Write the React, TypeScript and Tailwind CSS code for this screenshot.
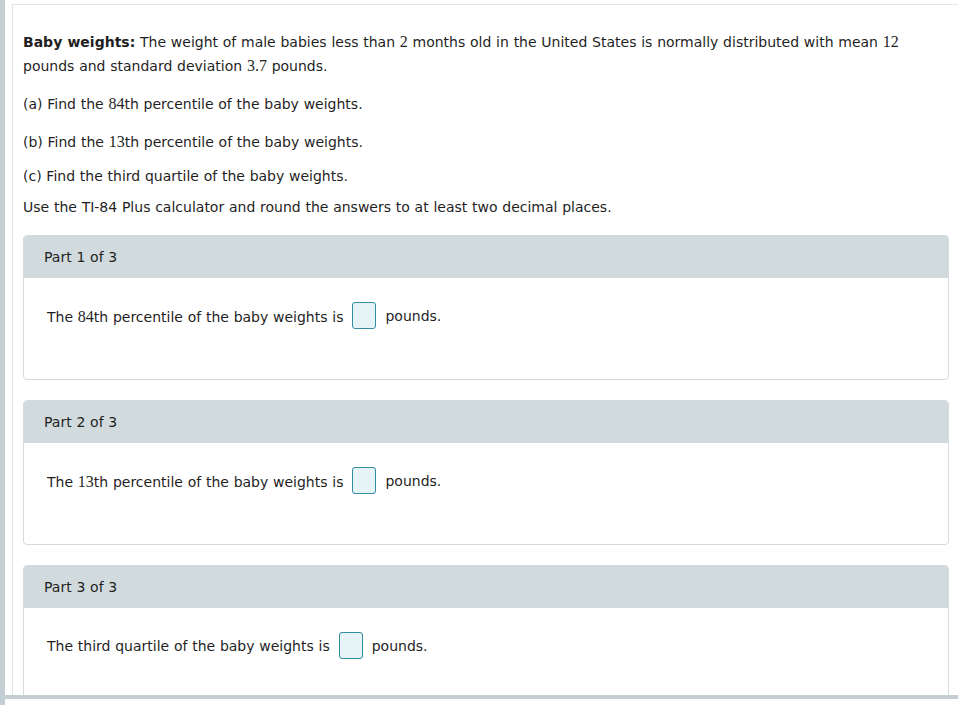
import React from "react";

function Num({ children }: { children: React.ReactNode }) {
    return <span className="[font-family:'Liberation_Serif','Times_New_Roman',serif] text-[16px] [word-spacing:0]">{children}</span>;
}

function PartCard({ part, label }: { part: number; label: React.ReactNode }) {
    return (
        <div className="border border-[#d3dbde] rounded-[4px] overflow-hidden bg-white">
            <div className="h-[42px] bg-[#d1dadd] flex items-center pl-[20px]">
                Part {part} of 3
            </div>
            <div className="h-[101px] px-[23px] pt-[24px]">
                <div className="flex items-center h-[27px] pt-[2px]">
                    <span>{label}</span>
                    <span className="mx-[9px] -mt-[2px] w-[24px] h-[27px] rounded-[3px] border border-[#2f8b9e] bg-[#e6f4f8]"></span>
                    <span>pounds.</span>
                </div>
            </div>
        </div>
    );
}

export default function App() {
    return (
        <div className="h-[705px] w-[958px] flex bg-white text-[14px] text-[#1f1f1f] overflow-hidden [font-family:'DejaVu_Sans',Verdana,sans-serif] [word-spacing:0.3px]">
            {/* left rail */}
            <div className="w-[5px] shrink-0 bg-[#c4cfd4]"></div>

            <div className="flex-1 flex flex-col min-w-0">
                <div className="h-[695px] overflow-hidden pl-[7px] pt-[4px]">
                    <div className="h-full border-l border-t border-[#dfe5e8] pl-[10px] pr-[9px] pt-[25px]">
                        <p className="leading-6">
                            <b>Baby weights:</b> The weight of male babies less than <Num>2</Num> months old in the United States is normally distributed with mean <Num>12</Num> pounds and standard deviation <Num>3.7</Num> pounds.
                        </p>
                        <p className="leading-6 mt-[14px]">
                            (a) Find the <Num>84</Num>th percentile of the baby weights.
                        </p>
                        <p className="leading-6 mt-[14px]">
                            (b) Find the <Num>13</Num>th percentile of the baby weights.
                        </p>
                        <p className="leading-6 mt-[10px]">(c) Find the third quartile of the baby weights.</p>
                        <p className="leading-6 mt-[7px]">
                            Use the TI-84 Plus calculator and round the answers to at least two decimal places.
                        </p>

                        <div className="mt-[16px] flex flex-col gap-[20px]">
                            <PartCard part={1} label={<>The <Num>84</Num>th percentile of the baby weights is</>} />
                            <PartCard part={2} label={<>The <Num>13</Num>th percentile of the baby weights is</>} />
                            <PartCard part={3} label={<>The third quartile of the baby weights is</>} />
                        </div>
                    </div>
                </div>
                {/* bottom scroll bar */}
                <div className="h-[4px] bg-[#c4cfd4]"></div>
                <div className="flex-1 bg-white"></div>
            </div>
        </div>
    );
}
